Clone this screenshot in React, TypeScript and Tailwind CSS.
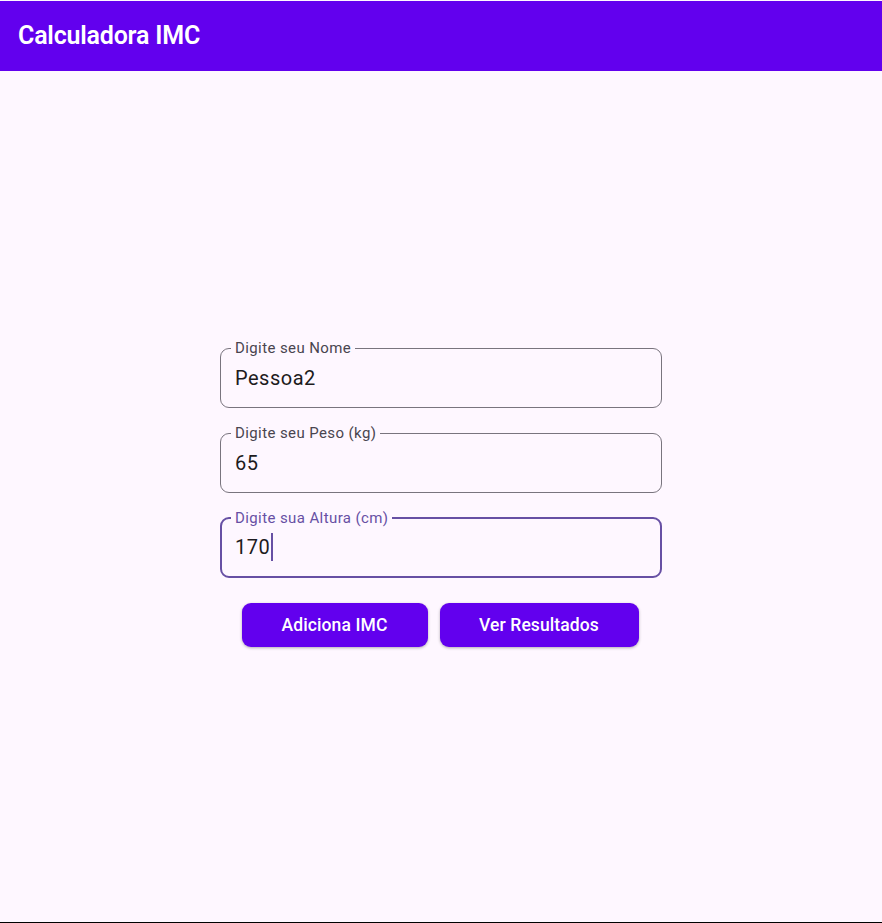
import React from "react";

function Field({ label, value, focused }: { label: string; value: string; focused?: boolean }) {
  return (
    <fieldset
      className={
        "h-[69px] rounded-[9px] px-[10px] " +
        (focused ? "border-2 border-[#6750A4]" : "border border-[#79747E]")
      }
    >
      <legend
        className={
          "px-[4px] text-[15px] leading-[18px] tracking-[0.4px] " +
          (focused ? "text-[#6750A4] ml-[-1px]" : "text-[#49454F] ml-[0px]")
        }
      >
        {label}
      </legend>
      <div
        className={
          "flex items-center text-[20px] leading-[28px] tracking-[0.5px] text-[#1D1B20] " +
          (focused ? "mt-[6px] pl-[3px]" : "mt-[7px] pl-[4px]")
        }
      >
        <span>{value}</span>
        {focused && <span className="ml-[1px] w-[2px] h-[28px] bg-[#6750A4]" />}
      </div>
    </fieldset>
  );
}

export default function App() {
  return (
    <div className="w-[882px] h-[923px] flex flex-col bg-[#FEF7FF]" style={{ fontFamily: "Roboto, 'Noto Sans', sans-serif" }}>
      <div className="h-[1px] bg-[#FEF7FF]" />
      <header className="h-[70px] bg-[#6200EE] flex items-center px-[18px]">
        <h1 className="text-white text-[25px] font-semibold tracking-[-0.2px]">Calculadora IMC</h1>
      </header>
      <main className="flex-1 flex flex-col items-center justify-center pb-[7px]">
        <div className="w-[442px] flex flex-col gap-[16px]">
          <Field label="Digite seu Nome" value="Pessoa2" />
          <Field label="Digite seu Peso (kg)" value="65" />
          <Field label="Digite sua Altura (cm)" value="170" focused />
        </div>
        <div className="flex gap-[12px] mt-[25px] mr-[2px]">
          <button className="w-[186px] h-[44px] rounded-[9px] bg-[#6200EE] text-white text-[17.5px] font-medium tracking-[0.1px] shadow-[0_1px_3px_rgba(0,0,0,0.3)]">
            Adiciona IMC
          </button>
          <button className="w-[199px] h-[44px] rounded-[9px] bg-[#6200EE] text-white text-[17.5px] font-medium tracking-[0.1px] shadow-[0_1px_3px_rgba(0,0,0,0.3)]">
            Ver Resultados
          </button>
        </div>
      </main>
      <div className="h-[1px] bg-black" />
    </div>
  );
}
